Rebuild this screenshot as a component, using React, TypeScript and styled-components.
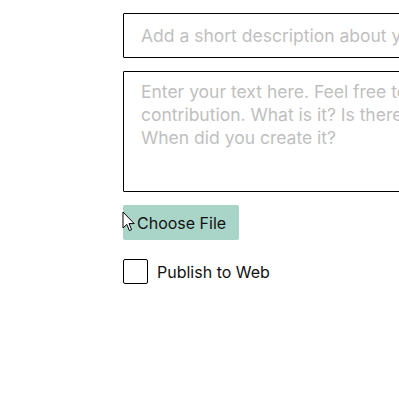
import styled, { createGlobalStyle } from "styled-components";

const GlobalStyle = createGlobalStyle`
  html, body {
    margin: 0;
    padding: 0;
    background: #fff;
    overflow: hidden;
  }
  body {
    font-family: "Inter", "Liberation Sans", sans-serif;
  }
`;

const Page = styled.div`
  width: 399px;
  height: 399px;
  overflow: hidden;
  padding: 13px 0 0 123px;
  box-sizing: border-box;
`;

const FormColumn = styled.div`
  display: flex;
  flex-direction: column;
  align-items: flex-start;
  width: 420px;
`;

const ShortInput = styled.input`
  box-sizing: border-box;
  width: 420px;
  height: 45px;
  margin: 0;
  padding: 0 17px;
  border: 1px solid #000;
  border-radius: 1px;
  font-family: inherit;
  font-size: 17.5px;
  color: #222;
  outline: none;
  &::placeholder {
    color: #bfbfbf;
  }
`;

const LongInput = styled.textarea`
  box-sizing: border-box;
  width: 420px;
  height: 121px;
  margin: 13px 0 0;
  padding: 8px 17px;
  border: 1px solid #000;
  border-radius: 1px;
  font-family: inherit;
  font-size: 17.5px;
  line-height: 23px;
  color: #222;
  resize: none;
  outline: none;
  white-space: pre;
  &::placeholder {
    color: #bfbfbf;
  }
`;

const FileButton = styled.label`
  position: relative;
  box-sizing: border-box;
  margin-top: 13px;
  width: 116px;
  height: 35px;
  display: flex;
  align-items: center;
  padding-left: 14px;
  background: #a9d4c8;
  border-radius: 2px;
  font-size: 16px;
  color: #111;
  cursor: pointer;
`;

const Cursor = styled.svg`
  position: absolute;
  left: -1px;
  top: 6px;
`;

const CheckRow = styled.label`
  margin-top: 19px;
  display: flex;
  align-items: center;
  gap: 9px;
  font-size: 16px;
  color: #111;
`;

const Box = styled.span`
  box-sizing: border-box;
  width: 25px;
  height: 25px;
  border: 1px solid #000;
  border-radius: 2px;
  background: #fff;
`;

const longPlaceholder =
  "Enter your text here. Feel free to tell us about your\ncontribution. What is it? Is there a story behind it?\nWhen did you create it?";

export default function App() {
  return (
    <>
      <GlobalStyle />
      <Page>
        <FormColumn>
          <ShortInput placeholder="Add a short description about your contribution" />
          <LongInput placeholder={longPlaceholder} />
          <FileButton>
            <Cursor width="14" height="22" viewBox="0 0 14 22">
              <path d="M1 1 L1 17 L4.8 13.4 L7.4 19.6 L9.6 18.7 L7 12.6 L12.2 12.6 Z" fill="#fff" stroke="#000" strokeWidth="1" strokeLinejoin="round" />
            </Cursor>
            Choose File
          </FileButton>
          <CheckRow>
            <Box />
            Publish to Web
          </CheckRow>
        </FormColumn>
      </Page>
    </>
  );
}
